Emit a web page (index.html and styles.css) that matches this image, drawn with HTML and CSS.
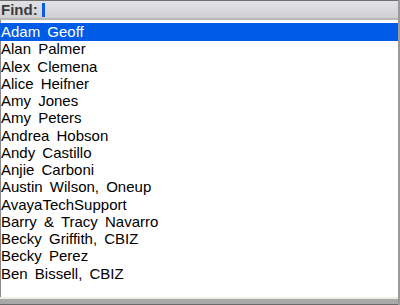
FILE: index.html
```html
<!DOCTYPE html>
<html lang="en">
<head>
    <meta charset="UTF-8">
    <title>Find Contact</title>
    <link rel="stylesheet" href="styles.css">
</head>
<body>
    <div class="screen">
        <div class="find-bar">
            <span class="find-label">Find:</span>
            <span class="cursor"></span>
        </div>
        <ul class="contact-list">
            <li class="selected">Adam Geoff</li>
            <li>Alan Palmer</li>
            <li>Alex Clemena</li>
            <li>Alice Heifner</li>
            <li>Amy Jones</li>
            <li>Amy Peters</li>
            <li>Andrea Hobson</li>
            <li>Andy Castillo</li>
            <li>Anjie Carboni</li>
            <li>Austin Wilson, Oneup</li>
            <li>AvayaTechSupport</li>
            <li>Barry &amp; Tracy Navarro</li>
            <li>Becky Griffith, CBIZ</li>
            <li>Becky Perez</li>
            <li>Ben Bissell, CBIZ</li>
        </ul>
        <div class="bottom-bar"></div>
    </div>
</body>
</html>
```

FILE: styles.css
```css
body {
    margin: 0;
    padding: 0;
    background-color: #ffffff;
    font-family: "Liberation Sans", Arial, sans-serif;
}
.screen {
    width: 400px;
    height: 305px;
    display: flex;
    flex-direction: column;
    box-sizing: border-box;
    border-right: 2px solid #9a9a9a;
    overflow: hidden;
}
.find-bar {
    height: 17px;
    border-top: 1px solid #707070;
    border-bottom: 2px solid #b8b8b8;
    background: linear-gradient(#e2e1e4, #d6d5d9 70%, #cfcfd2);
    display: flex;
    align-items: center;
    padding-left: 1px;
    gap: 4px;
}
.find-label {
    font-size: 15px;
    font-weight: bold;
    color: #3c3c3c;
}
.cursor {
    width: 3px;
    height: 14px;
    background-color: #0a5ce6;
}
.contact-list {
    list-style-type: none;
    margin: 0;
    padding: 3px 0 0 0;
    flex: 1;
    border-left: 1px solid #8a8a8a;
}
.contact-list li {
    height: 17.25px;
    line-height: 18px;
    font-size: 15px;
    word-spacing: 3px;
    color: #000000;
    white-space: nowrap;
}
.contact-list li.selected {
    height: 18px;
    margin-bottom: -0.75px;
    background-color: #005ce6;
    color: #ffffff;
    margin-left: -1px;
    padding-left: 1px;
}
.bottom-bar {
    height: 5px;
    border-top: 2px solid #f0efe6;
    background-color: #a8a8a8;
    border-bottom: 1px solid #6a6a6a;
}
```
